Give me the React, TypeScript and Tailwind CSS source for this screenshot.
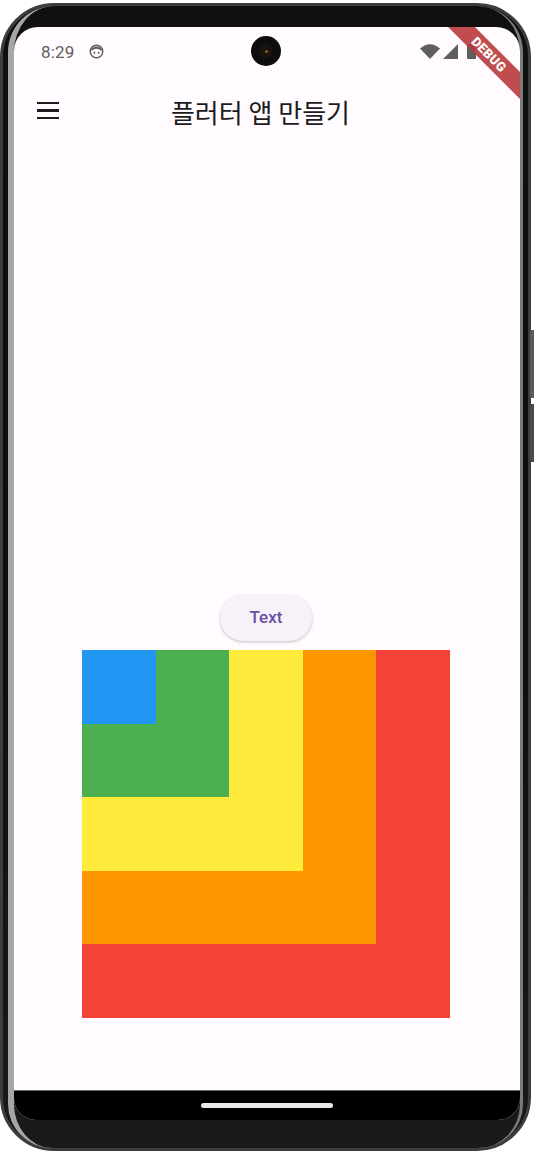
import React from 'react';

const boxes = [
  { size: 'w-[368px] h-[368px]', color: 'bg-[#f44336]' },
  { size: 'w-[294px] h-[294px]', color: 'bg-[#ff9800]' },
  { size: 'w-[221px] h-[221px]', color: 'bg-[#ffeb3b]' },
  { size: 'w-[147px] h-[147px]', color: 'bg-[#4caf50]' },
  { size: 'w-[74px] h-[74px]', color: 'bg-[#2196f3]' },
];

function NestedBoxes({ level = 0 }: { level?: number }) {
  const b = boxes[level];
  if (!b) return null;
  return (
    <div className={`${b.size} ${b.color} flex items-start justify-start shrink-0`}>
      <NestedBoxes level={level + 1} />
    </div>
  );
}

function StatusBar() {
  return (
    <div className="relative h-[49px] flex items-center pl-[27px] pr-[44px] text-[#5f5f5f]">
      <span className="text-[17px] leading-none font-['Roboto',sans-serif] tracking-[0.2px] pt-[1px]">8:29</span>
      {/* little face notification icon */}
      <svg className="ml-[14px]" width="15" height="15" viewBox="0 0 24 24">
        <circle cx="12" cy="12" r="10" fill="none" stroke="#5f5f5f" strokeWidth="2.4" />
        <path d="M4 11 Q12 4 20 11 L20 7 Q12 1 4 7 Z" fill="#5f5f5f" />
        <circle cx="8.5" cy="14" r="1.6" fill="#5f5f5f" />
        <circle cx="15.5" cy="14" r="1.6" fill="#5f5f5f" />
      </svg>
      {/* camera cutout */}
      <div className="absolute left-[237px] top-[9px] w-[30px] h-[30px] rounded-full bg-[#0d0d0d] flex items-center justify-center">
        <div className="w-[14px] h-[14px] rounded-full bg-[#1a1410] flex items-center justify-center">
          <div className="w-[3px] h-[3px] rounded-full bg-[#8a5a2a]" />
        </div>
      </div>
      <div className="ml-auto flex items-center gap-[3px]">
        <svg width="20" height="15" viewBox="0 0 20 15">
          <path d="M0 4.5 Q10 -4 20 4.5 L10 15 Z" fill="#5f5f5f" />
        </svg>
        <svg width="15" height="15" viewBox="0 0 15 15">
          <path d="M15 0 L15 15 L0 15 Z" fill="#5f5f5f" />
        </svg>
        <div className="ml-[6px] w-[9px] h-[15px] bg-[#5f5f5f] rounded-[1px]" />
      </div>
    </div>
  );
}

function AppBar() {
  return (
    <div className="relative h-[69px] flex items-center">
      <div className="pl-[23px] flex flex-col gap-[5px]">
        <div className="w-[22px] h-[2.4px] bg-[#1d1b20]" />
        <div className="w-[22px] h-[2.4px] bg-[#1d1b20]" />
        <div className="w-[22px] h-[2.4px] bg-[#1d1b20]" />
      </div>
      <div className="absolute inset-0 flex items-center justify-center pr-[13px] pointer-events-none">
        <span className="text-[26px] leading-none text-[#1d1b20] font-['Noto_Sans_CJK_KR','Noto_Sans',sans-serif] pt-[2px]">
          플러터 앱 만들기
        </span>
      </div>
    </div>
  );
}

export default function App() {
  return (
    <div className="w-[534px] h-[1152px] bg-white overflow-hidden relative">
      {/* side keys */}
      <div className="absolute right-0 top-[330px] w-[4px] h-[68px] bg-[#5a5a5a] rounded-l-[1px]" />
      <div className="absolute right-0 top-[404px] w-[4px] h-[58px] bg-[#4a4a4a] rounded-l-[1px]" />

      <div className="mt-[3px] w-[531px] h-[1148px] rounded-[54px] border-[3px] border-[#3d3d3d] bg-gradient-to-b from-[#101010] via-[#0c0c0c] to-[#1a1a1a] px-[5px]">
        <div className="h-full rounded-t-[46px] rounded-b-[44px] border-l-[6px] border-l-[#a6a6a6] border-r-[3px] border-r-[#7a7a7a] pt-[21px] pb-[25px]">
          <div className="h-[1093px] rounded-t-[24px] rounded-b-[22px] overflow-hidden bg-[#fffbfe] flex flex-col relative">
            <StatusBar />
            <AppBar />

            <div className="flex-1 flex flex-col items-center justify-end pb-[72px] pr-[2px]">
              <button className="w-[92px] h-[46px] rounded-full bg-[#f7f2fa] text-[#6750a4] text-[17px] font-medium font-['Roboto',sans-serif] shadow-[0_1px_3px_rgba(0,0,0,0.25)] mb-[9px]">
                Text
              </button>
              <NestedBoxes />
            </div>

            {/* android nav bar */}
            <div className="h-[30px] bg-black border-t border-t-[#6a6a6a] flex items-center justify-center shrink-0">
              <div className="w-[132px] h-[5px] rounded-full bg-[#e8e8e8]" />
            </div>

            {/* debug banner */}
            <div className="absolute left-[413px] top-[18px] w-[124px] h-[19px] rotate-45 bg-[#b93a3a]/90 flex items-center justify-center">
              <span className="text-white text-[13px] font-black leading-none font-['Roboto',sans-serif] tracking-[0.3px]">DEBUG</span>
            </div>
          </div>
        </div>
      </div>
    </div>
  );
}
